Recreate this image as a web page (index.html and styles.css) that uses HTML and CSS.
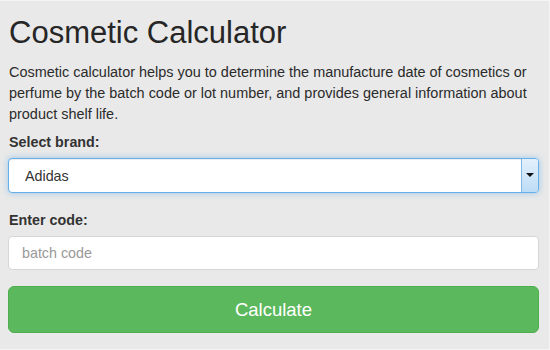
FILE: index.html
```html
<!DOCTYPE html>
<html lang="en">
<head>
  <meta charset="UTF-8" />
  <meta name="viewport" content="width=device-width, initial-scale=1.0" />
  <title>Cosmetic Calculator</title>
  <link rel="stylesheet" href="styles.css">
</head>
<body>
  <div class="calc-container">
    <h1>Cosmetic Calculator</h1>
    <p class="intro">Cosmetic calculator helps you to determine the manufacture date of cosmetics or perfume by the batch code or lot number, and provides general information about product shelf life.</p>
    <form id="calcForm">
      <label for="brand">Select brand:</label>
      <div class="select-wrap">
        <select id="brand" name="brand">
          <option>Adidas</option>
          <option>Avon</option>
          <option>Chanel</option>
          <option>Dior</option>
        </select>
        <span class="select-arrow"></span>
      </div>
      <label for="code">Enter code:</label>
      <input type="text" id="code" name="code" placeholder="batch code">
      <button type="submit">Calculate</button>
    </form>
  </div>
</body>
</html>
```

FILE: styles.css
```css
* {
  margin: 0;
  padding: 0;
  box-sizing: border-box;
  font-family: 'Liberation Sans', Arial, sans-serif;
}

html {
  background: #e9e9e9;
}

body {
  min-height: 350px;
  background: #e9e9e9;
  border: 1px solid #f4f4f4;
  border-left: none;
  color: #333;
}

.calc-container {
  padding: 14px 10px 0 8px;
}

h1 {
  font-size: 31px;
  font-weight: normal;
  line-height: 36px;
  margin-bottom: 11px;
  margin-left: 1px;
  color: #262626;
}

.intro {
  font-size: 14.45px;
  line-height: 21px;
  margin-left: 1px;
  margin-bottom: 7px;
  color: #2b2b2b;
}

label {
  display: block;
  font-size: 14.3px;
  font-weight: bold;
  line-height: 20px;
  margin-left: 1px;
  margin-bottom: 6px;
}

.select-wrap {
  position: relative;
  margin-bottom: 17px;
}

select {
  -webkit-appearance: none;
  appearance: none;
  width: 100%;
  height: 35px;
  padding: 0 16px;
  font-size: 14.3px;
  color: #333;
  background: #fff;
  border: 1px solid #66afe9;
  border-radius: 4px;
  box-shadow: inset 0 1px 1px rgba(0, 0, 0, 0.075), 0 0 6px rgba(102, 175, 233, 0.6);
  outline: none;
}

.select-arrow {
  position: absolute;
  top: 1px;
  right: 1px;
  width: 17px;
  height: 33px;
  border-left: 1px solid #7fb6e2;
  border-radius: 0 3px 3px 0;
  background: linear-gradient(#e3f0fc, #bcdcf6);
  pointer-events: none;
}

.select-arrow::after {
  content: "";
  position: absolute;
  left: 4px;
  top: 14px;
  border-left: 4px solid transparent;
  border-right: 4px solid transparent;
  border-top: 4px solid #111;
}

input {
  width: 100%;
  height: 34px;
  padding: 0 13px;
  font-size: 14.3px;
  color: #555;
  background: #fff;
  border: 1px solid #d6d6d6;
  border-radius: 4px;
  margin-bottom: 16px;
}

input::placeholder {
  color: #999;
}

button {
  display: block;
  width: 100%;
  height: 47px;
  font-size: 18.5px;
  color: #fff;
  background: #5cb85c;
  border: 1px solid #4cae4c;
  border-radius: 6px;
  cursor: pointer;
}
```
